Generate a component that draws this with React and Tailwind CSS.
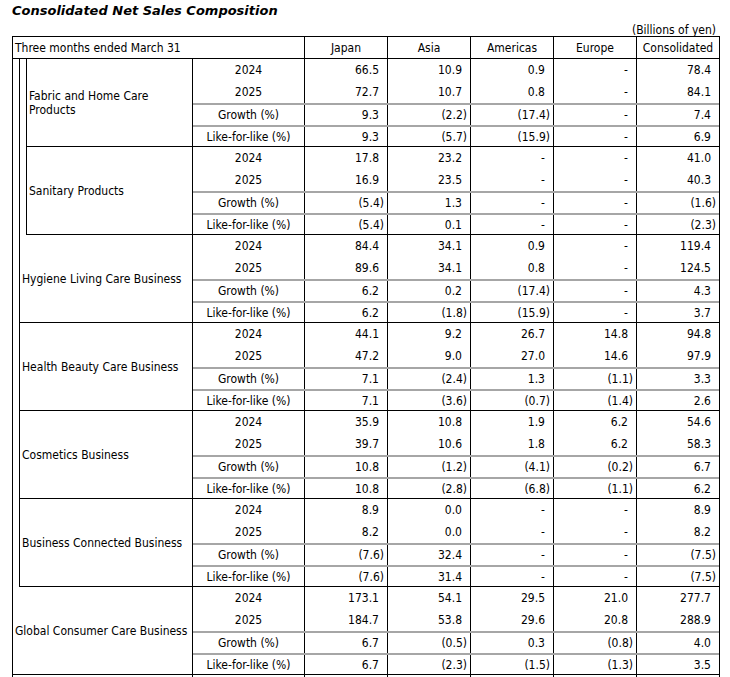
const regions = ['Japan', 'Asia', 'Americas', 'Europe', 'Consolidated']
const rowNames = ['2024', '2025', 'Growth (%)', 'Like-for-like (%)']

const blocks = {
  fabric: [
    ['66.5', '10.9', '0.9', '-', '78.4'],
    ['72.7', '10.7', '0.8', '-', '84.1'],
    ['9.3', '(2.2)', '(17.4)', '-', '7.4'],
    ['9.3', '(5.7)', '(15.9)', '-', '6.9'],
  ],
  sanitary: [
    ['17.8', '23.2', '-', '-', '41.0'],
    ['16.9', '23.5', '-', '-', '40.3'],
    ['(5.4)', '1.3', '-', '-', '(1.6)'],
    ['(5.4)', '0.1', '-', '-', '(2.3)'],
  ],
  hygiene: [
    ['84.4', '34.1', '0.9', '-', '119.4'],
    ['89.6', '34.1', '0.8', '-', '124.5'],
    ['6.2', '0.2', '(17.4)', '-', '4.3'],
    ['6.2', '(1.8)', '(15.9)', '-', '3.7'],
  ],
  health: [
    ['44.1', '9.2', '26.7', '14.8', '94.8'],
    ['47.2', '9.0', '27.0', '14.6', '97.9'],
    ['7.1', '(2.4)', '1.3', '(1.1)', '3.3'],
    ['7.1', '(3.6)', '(0.7)', '(1.4)', '2.6'],
  ],
  cosmetics: [
    ['35.9', '10.8', '1.9', '6.2', '54.6'],
    ['39.7', '10.6', '1.8', '6.2', '58.3'],
    ['10.8', '(1.2)', '(4.1)', '(0.2)', '6.7'],
    ['10.8', '(2.8)', '(6.8)', '(1.1)', '6.2'],
  ],
  connected: [
    ['8.9', '0.0', '-', '-', '8.9'],
    ['8.2', '0.0', '-', '-', '8.2'],
    ['(7.6)', '32.4', '-', '-', '(7.5)'],
    ['(7.6)', '31.4', '-', '-', '(7.5)'],
  ],
  global: [
    ['173.1', '54.1', '29.5', '21.0', '277.7'],
    ['184.7', '53.8', '29.6', '20.8', '288.9'],
    ['6.7', '(0.5)', '0.3', '(0.8)', '4.0'],
    ['6.7', '(2.3)', '(1.5)', '(1.3)', '3.5'],
  ],
  next: [
    ['', '', '', '', ''],
    ['', '', '', '', ''],
    ['', '', '', '', ''],
    ['', '', '', '', ''],
  ],
}

const DataRow = ({ name, values, index }) => {
  const rowClass =
    index === 0 ? 'h-[22px]' : index === 1 ? 'h-[22px]' : index === 2 ? 'h-[22px] border-t-2 border-[#a6a6a6]' : 'h-[21px] border-t-2 border-[#a6a6a6]'
  return (
    <div className={`flex ${rowClass}`}>
      <div className="w-[112px] flex items-center justify-center border-r border-black">{name}</div>
      {values.map((v, i) => (
        <div
          key={i}
          className={`flex items-center justify-end ${i < 4 ? 'w-[83px] border-r border-black' : 'w-[82px]'} ${
            v.startsWith('(') ? 'pr-[3px]' : 'pr-[8px]'
          }`}
        >
          {v}
        </div>
      ))}
    </div>
  )
}

const Block = ({ label, data, bordered = true }) => (
  <div className={`flex ${bordered ? 'border-b border-black' : ''}`}>
    <div className="flex-1 flex items-center pl-[2px] pr-[4px] border-r border-black leading-[14px]">{label}</div>
    <div className="w-[526px]">
      {data.map((values, i) => (
        <DataRow key={i} name={label === '' ? '' : rowNames[i]} values={values} index={i} />
      ))}
    </div>
  </div>
)

// nested group box: thin strip on the left, then a box with its own left/bottom line
const Group = ({ children }) => (
  <div className="flex">
    <div className="w-[6px]" />
    <div className="flex-1 border-l border-b border-black">{children}</div>
  </div>
)

export default function App() {
  return (
    <div className="w-[730px] h-[677px] overflow-hidden bg-white text-black text-[12px] font-['DejaVu_Sans_Condensed','DejaVu_Sans',sans-serif]">
      <div className="h-[22px] pl-[12px] pt-[2px] text-[13px] font-bold italic leading-[17px] font-['DejaVu_Sans',sans-serif]">
        Consolidated Net Sales Composition
      </div>
      <div className="h-[14px] text-right pr-[14px] leading-[16px]">(Billions of yen)</div>
      <div className="ml-[12px] w-[708px] border border-black">
        <div className="flex h-[22px] border-b border-black">
          <div className="flex-1 flex items-center pl-[2px] border-r border-black">Three months ended March 31</div>
          {regions.map((r, i) => (
            <div key={r} className={`flex items-center justify-center ${i < 4 ? 'w-[83px] border-r border-black' : 'w-[82px]'}`}>
              {r}
            </div>
          ))}
        </div>
        <Group>
          <Group>
            <Block label="Fabric and Home Care Products" data={blocks.fabric} />
            <Block label="Sanitary Products" data={blocks.sanitary} bordered={false} />
          </Group>
          <Block label="Hygiene Living Care Business" data={blocks.hygiene} />
          <Block label="Health Beauty Care Business" data={blocks.health} />
          <Block label="Cosmetics Business" data={blocks.cosmetics} />
          <Block label="Business Connected Business" data={blocks.connected} bordered={false} />
        </Group>
        <Block label="Global Consumer Care Business" data={blocks.global} />
        <Block label="" data={blocks.next} bordered={false} />
      </div>
    </div>
  )
}
